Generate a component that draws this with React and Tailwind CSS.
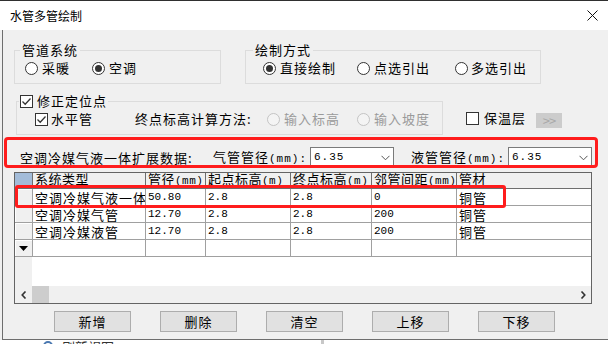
import React from "react";

const CJK = "font-['Noto_Sans_CJK_SC',sans-serif]";
const MONO = "font-['Liberation_Mono',monospace] text-[11px]";

function Radio({ checked, disabled }) {
  return (
    <span
      className={`flex h-[13px] w-[13px] shrink-0 items-center justify-center rounded-full border ${
        disabled ? "border-[#c4c4c4] bg-[#f4f4f4]" : "border-[#333333] bg-white"
      }`}
    >
      {checked && <span className="h-[7px] w-[7px] rounded-full bg-[#333333]" />}
    </span>
  );
}

function Check({ checked }) {
  return (
    <span className="flex h-[13px] w-[13px] shrink-0 items-center justify-center border border-[#333333] bg-white">
      {checked && (
        <svg width="11" height="11" viewBox="0 0 11 11">
          <path d="M1.5 5.5 L4.2 8.2 L9.5 2.5" fill="none" stroke="#333" strokeWidth="1.3" />
        </svg>
      )}
    </span>
  );
}

function Select({ value }) {
  return (
    <div className="flex h-[21px] w-[84px] items-center justify-between border border-[#7a7a7a] bg-white pl-[3px] pr-[3px]">
      <span className={MONO}>{value}</span>
      <svg width="9" height="6" viewBox="0 0 9 6">
        <path d="M0.5 0.8 L4.5 4.8 L8.5 0.8" fill="none" stroke="#555" strokeWidth="1" />
      </svg>
    </div>
  );
}

const cols = [
  { w: "w-[113px]", head: ["系统类型", ""] },
  { w: "w-[60px]", head: ["管径", "(mm)"] },
  { w: "w-[85px]", head: ["起点标高", "(m)"] },
  { w: "w-[81px]", head: ["终点标高", "(m)"] },
  { w: "w-[85px]", head: ["邻管间距", "(mm)"] },
  { w: "flex-1", head: ["管材", ""] },
];

const rows = [
  ["空调冷媒气液一体", "50.80", "2.8", "2.8", "0", "铜管"],
  ["空调冷媒气管", "12.70", "2.8", "2.8", "200", "铜管"],
  ["空调冷媒液管", "12.70", "2.8", "2.8", "200", "铜管"],
  ["", "", "", "", "", ""],
];

function Cell({ text }) {
  const num = /^[\d.]+$/.test(text);
  return num ? (
    <span className={MONO}>{text}</span>
  ) : (
    <span className="whitespace-nowrap text-[13px] leading-[15px] tracking-[1px]">{text}</span>
  );
}

export default function App() {
  return (
    <div className={`${CJK} h-[344px] w-[608px] overflow-hidden bg-[#f0f0f0] text-black`}>
      {/* title bar */}
      <div className="flex h-[30px] items-center justify-between border-t border-[#2f2f2f] bg-white pl-[10px] pr-[10px]">
        <span className="text-[12px] leading-[16px]">水管多管绘制</span>
        <svg width="11" height="11" viewBox="0 0 11 11">
          <path d="M0.5 0.5 L10.5 10.5 M10.5 0.5 L0.5 10.5" stroke="#111" strokeWidth="1" />
        </svg>
      </div>

      {/* body */}
      <div className="relative ml-[2px] h-[310px] border-b border-l border-[#6e6e6e] bg-[#f0f0f0] text-[13px] tracking-[1px]">
        {/* row 1: two group boxes */}
        <div className="flex pt-[12px]">
          <fieldset className="ml-[11px] w-[207px] border border-[#dcdcdc] pb-[5px]">
            <legend className="ml-[5px] px-[2px] leading-[16px]">管道系统</legend>
            <div className="flex h-[20px] items-center pl-[10px]">
              <Radio />
              <span className="ml-[4px]">采暖</span>
              <span className="ml-[22px]">
                <Radio checked />
              </span>
              <span className="ml-[4px]">空调</span>
            </div>
          </fieldset>
          <fieldset className="ml-[24px] w-[296px] border border-[#dcdcdc] pb-[5px]">
            <legend className="ml-[7px] px-[2px] leading-[16px]">绘制方式</legend>
            <div className="flex h-[20px] items-center pl-[17px]">
              <Radio checked />
              <span className="ml-[4px] w-[77px]">直接绘制</span>
              <Radio />
              <span className="ml-[4px] w-[81px]">点选引出</span>
              <Radio />
              <span className="ml-[3px]">多选引出</span>
            </div>
          </fieldset>
        </div>

        {/* row 2: 修正定位点 */}
        <div className="mt-[9px] flex items-start">
          <fieldset className="ml-[13px] w-[427px] border border-[#dcdcdc] pb-[5px]">
            <legend className="ml-[2px] flex items-center px-[1px] leading-[16px]">
              <Check checked />
              <span className="ml-[4px]">修正定位点</span>
            </legend>
            <div className="flex h-[20px] items-center pl-[18px]">
              <Check checked />
              <span className="ml-[3px] w-[84px]">水平管</span>
              <span className="w-[132px] whitespace-nowrap">终点标高计算方法:</span>
              <Radio disabled />
              <span className="ml-[4px] w-[73px] text-[#9a9a9a]">输入标高</span>
              <Radio disabled />
              <span className="ml-[4px] text-[#9a9a9a]">输入坡度</span>
            </div>
          </fieldset>
          <div className="ml-[23px] mt-[15px] flex h-[20px] items-center">
            <Check />
            <span className="ml-[5px]">保温层</span>
          </div>
          <div className="ml-[10px] mt-[20px] flex h-[15px] w-[26px] items-center justify-center bg-[#cccccc] text-[13px] leading-none tracking-[-1px] text-[#a8a8a8]">
            &gt;&gt;
          </div>
        </div>

        {/* row 3: 扩展数据 */}
        <div className="mt-[12px] flex h-[21px] items-center pl-[17px]">
          <span className="w-[193px] whitespace-nowrap">空调冷媒气液一体扩展数据:</span>
          <span className="w-[97px] whitespace-nowrap">
            气管管径<span className={MONO}>(mm):</span>
          </span>
          <Select value="6.35" />
          <span className="ml-[17px] w-[97px] whitespace-nowrap">
            液管管径<span className={MONO}>(mm):</span>
          </span>
          <Select value="6.35" />
        </div>

        {/* grid */}
        <div className="ml-[11px] mt-[4px] flex h-[132px] w-[578px] flex-col border border-[#646464] bg-white tracking-normal">
          <div className="flex h-[16px] bg-[#f0f0f0]">
            <div className="w-[18px] shrink-0 border-b border-r border-[#6e6e6e] bg-[#a3bcd9]" />
            {cols.map((c, i) => (
              <div
                key={i}
                className={`${c.w} flex shrink-0 items-start overflow-hidden border-b border-[#6e6e6e] pl-[2px] ${
                  i < cols.length - 1 ? "border-r" : ""
                }`}
              >
                <span className="-mt-[2px] whitespace-nowrap text-[13px] leading-[16px] tracking-[0.5px]">
                  {c.head[0]}
                  {c.head[1] && <span className={MONO}>{c.head[1]}</span>}
                </span>
              </div>
            ))}
          </div>
          {rows.map((r, ri) => (
            <div key={ri} className="flex h-[17px]">
              <div className="flex w-[18px] shrink-0 items-center justify-center border-b border-r border-[#a0a0a0] bg-[#f0f0f0] shadow-[inset_1px_1px_0_#ffffff]">
                {ri === rows.length - 1 && (
                  <svg width="9" height="5" viewBox="0 0 9 5">
                    <path d="M0 0 L9 0 L4.5 5 Z" fill="#000" />
                  </svg>
                )}
              </div>
              {r.map((t, ci) => (
                <div
                  key={ci}
                  className={`${cols[ci].w} flex shrink-0 items-center overflow-hidden border-b border-[#a0a0a0] pl-[2px] ${
                    ci < cols.length - 1 ? "border-r" : ""
                  }`}
                >
                  <Cell text={t} />
                </div>
              ))}
            </div>
          ))}
          <div className="flex flex-1">
            <div className="w-[17px] bg-[#f0f0f0]" />
          </div>
          <div className="flex h-[17px] items-center bg-[#f0f0f0]">
            <div className="flex h-full w-[17px] items-center justify-center">
              <svg width="6" height="8" viewBox="0 0 6 8">
                <path d="M4.5 0.5 L1.2 4 L4.5 7.5" fill="none" stroke="#333" strokeWidth="1.6" />
              </svg>
            </div>
            <div className="h-full w-[17px] bg-[#cdcdcd]" />
            <div className="flex-1" />
            <div className="flex h-full w-[17px] items-center justify-center">
              <svg width="6" height="8" viewBox="0 0 6 8">
                <path d="M1.5 0.5 L4.8 4 L1.5 7.5" fill="none" stroke="#333" strokeWidth="1.6" />
              </svg>
            </div>
          </div>
        </div>

        {/* buttons */}
        <div className="mt-[7px] flex gap-[29px] pl-[51px]">
          {["新增", "删除", "清空", "上移", "下移"].map((b) => (
            <div
              key={b}
              className="flex h-[21px] w-[77px] items-center justify-center border border-[#adadad] bg-[#e1e1e1] leading-none"
            >
              {b}
            </div>
          ))}
        </div>

        {/* annotation boxes */}
        <div className="pointer-events-none absolute left-[1px] top-[107px] h-[31px] w-[594px] rounded-[4px] border-[3px] border-[#ff1c1c]" />
        <div className="pointer-events-none absolute left-[12px] top-[155px] h-[23px] w-[491px] rounded-[3px] border-[3px] border-[#ff1c1c]" />
      </div>

      {/* window behind, clipped */}
      <div className="flex h-[4px] overflow-hidden bg-white">
        <span className="ml-[43px] mt-[1px] h-[10px] w-[10px] shrink-0 rounded-full border-2 border-[#4a78b0]" />
        <span className="ml-[9px] text-[13px] leading-[13px] text-[#333]">刷新视图</span>
        <span className="ml-[207px] h-full w-[3px] bg-[#c8c8c8]" />
      </div>
    </div>
  );
}
